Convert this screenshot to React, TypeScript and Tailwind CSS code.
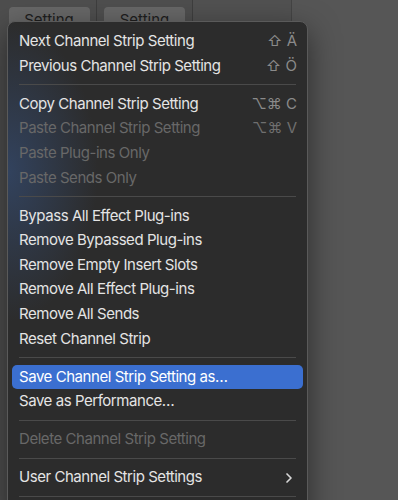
import { ChevronRight } from "lucide-react";

type Item =
  | { kind: "sep" }
  | {
      kind: "item";
      label: string;
      shortcut?: string;
      disabled?: boolean;
      active?: boolean;
      submenu?: boolean;
    };

const ITEMS: Item[] = [
  { kind: "item", label: "Next Channel Strip Setting", shortcut: "⇧ Ä" },
  { kind: "item", label: "Previous Channel Strip Setting", shortcut: "⇧ Ö" },
  { kind: "sep" },
  { kind: "item", label: "Copy Channel Strip Setting", shortcut: "⌥⌘ C" },
  { kind: "item", label: "Paste Channel Strip Setting", shortcut: "⌥⌘ V", disabled: true },
  { kind: "item", label: "Paste Plug-ins Only", disabled: true },
  { kind: "item", label: "Paste Sends Only", disabled: true },
  { kind: "sep" },
  { kind: "item", label: "Bypass All Effect Plug-ins" },
  { kind: "item", label: "Remove Bypassed Plug-ins" },
  { kind: "item", label: "Remove Empty Insert Slots" },
  { kind: "item", label: "Remove All Effect Plug-ins" },
  { kind: "item", label: "Remove All Sends" },
  { kind: "item", label: "Reset Channel Strip" },
  { kind: "sep" },
  { kind: "item", label: "Save Channel Strip Setting as…", active: true },
  { kind: "item", label: "Save as Performance…" },
  { kind: "sep" },
  { kind: "item", label: "Delete Channel Strip Setting", disabled: true },
  { kind: "sep" },
  { kind: "item", label: "User Channel Strip Settings", submenu: true },
  { kind: "sep" },
];

function TopButton() {
  return (
    <div className="mt-[7px] flex h-[26px] w-[81px] justify-center rounded-[4px] bg-[#676767] pt-[4px] text-[15px] leading-[18px] text-[#1e1e1e]">
      Setting
    </div>
  );
}

export default function App() {
  return (
    <div
      className="relative h-[500px] w-[398px] overflow-hidden bg-[#555555]"
      style={{ fontFamily: "Inter, 'Noto Sans', sans-serif" }}
    >
      {/* mixer strips behind the menu */}
      <div className="flex h-full">
        <div className="flex h-full w-[97px] justify-center border-r border-[#3e3e3e] bg-[#4e4e4e] pl-[2px]">
          <TopButton />
        </div>
        <div className="flex h-full w-[96px] justify-center border-r border-[#3e3e3e] bg-[#4e4e4e]">
          <TopButton />
        </div>
        <div className="h-full w-[99px] border-r border-[#444444] bg-[#515151]" />
        <div className="h-full flex-1 bg-[#565656]" />
      </div>

      {/* context menu */}
      <div className="absolute left-[7px] top-[21px] w-[301px] rounded-[8px] border border-[#5a5a5a] bg-[#2c2c2c] bg-[radial-gradient(ellipse_90px_150px_at_0%_30%,rgba(55,85,135,0.55),transparent)] pb-4 pt-[7px] shadow-[0_10px_30px_rgba(0,0,0,0.5)]">
        {ITEMS.map((item, i) =>
          item.kind === "sep" ? (
            <div key={i} className="flex h-[13.5px] items-center px-[11px]">
              <div className="h-px w-full bg-[#4a4a4a]" />
            </div>
          ) : (
            <div
              key={i}
              className={
                "mx-[4px] flex h-[24.6px] items-center rounded-[5px] pl-[7px] pr-[6px] text-[15px] tracking-[-0.45px] " +
                (item.active
                  ? "bg-[#3b6fd0] text-white"
                  : item.disabled
                    ? "text-[#686868]"
                    : "text-[#e4e4e4]")
              }
            >
              <span className="flex-1">{item.label}</span>
              {item.shortcut && (
                <span
                  className={
                    "text-[15px] tracking-normal " +
                    (item.disabled ? "text-[#6f6f6f]" : "text-[#8a8a8a]")
                  }
                >
                  {item.shortcut}
                </span>
              )}
              {item.submenu && (
                <ChevronRight className="size-[16px] text-[#d8d8d8]" strokeWidth={2.5} />
              )}
            </div>
          ),
        )}
      </div>
    </div>
  );
}
